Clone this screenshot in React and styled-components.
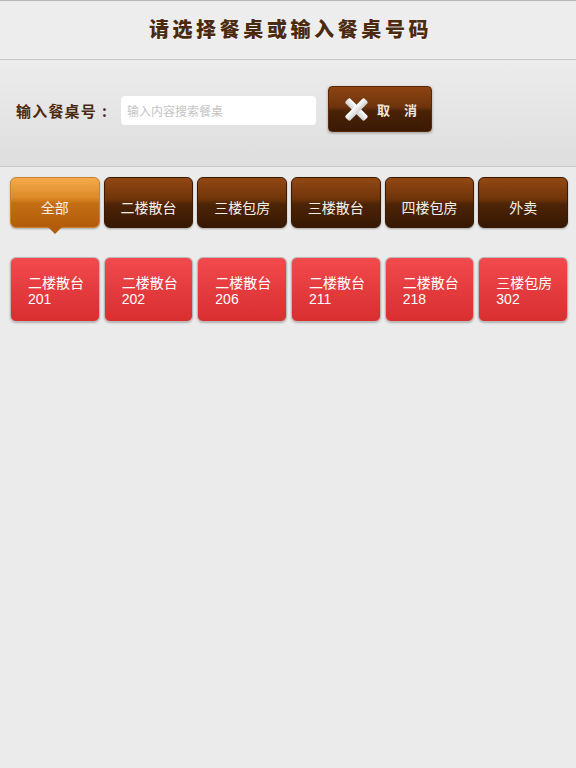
import styled, { createGlobalStyle } from 'styled-components';

const GlobalStyle = createGlobalStyle`
    html, body {
        margin: 0;
        padding: 0;
        background: #ebebeb;
        font-family: "Noto Sans CJK SC", "Liberation Sans", sans-serif;
    }
    * { box-sizing: border-box; }
`

let categories = ['全部', '二楼散台', '三楼包房', '三楼散台', '四楼包房', '外卖']

let tables = [
    { area: '二楼散台', no: '201' },
    { area: '二楼散台', no: '202' },
    { area: '二楼散台', no: '206' },
    { area: '二楼散台', no: '211' },
    { area: '二楼散台', no: '218' },
    { area: '三楼包房', no: '302' },
]

let CrossIcon = () => (
    <svg width="23" height="23" viewBox="0 0 24 24">
        <defs>
            <linearGradient id="xg" x1="0" y1="0" x2="0" y2="1">
                <stop offset="0" stopColor="#ffffff" />
                <stop offset="1" stopColor="#cfcfcf" />
            </linearGradient>
        </defs>
        <g fill="url(#xg)">
            <rect x="-2" y="8.5" width="28" height="7" rx="2" transform="rotate(45 12 12)" />
            <rect x="-2" y="8.5" width="28" height="7" rx="2" transform="rotate(-45 12 12)" />
        </g>
    </svg>
)

let App = () => {
    return (
        <Page>
            <GlobalStyle />
            <Header>
                <Title>请选择餐桌或输入餐桌号码</Title>
            </Header>
            <SearchBar>
                <Label>输入餐桌号<Colon>:</Colon></Label>
                <SearchInput placeholder='输入内容搜索餐桌' />
                <CancelButton>
                    <CrossIcon />
                    <span>取</span>
                    <span>消</span>
                </CancelButton>
            </SearchBar>
            <Tabs>
                {categories.map((c, i) => (
                    <Tab key={c} active={i === 0}>{c}</Tab>
                ))}
            </Tabs>
            <Tables>
                {tables.map(t => (
                    <TableCard key={t.no}>
                        <span>{t.area}</span>
                        <span>{t.no}</span>
                    </TableCard>
                ))}
            </Tables>
        </Page>
    )
}

let Page = styled.div`
    width: 576px;
    min-height: 768px;
    background: #ebebeb;
`

let Header = styled.div`
    height: 60px;
    border-top: 1px solid #b4b4b4;
    border-bottom: 1px solid #c9c9c9;
    background: #ededed;
    display: flex;
    align-items: center;
    justify-content: center;
    padding-bottom: 3px;
`

let Title = styled.h1`
    margin: 0;
    padding-left: 5px;
    font-size: 20px;
    font-weight: 900;
    letter-spacing: 3.6px;
    color: #4b2a0f;
    text-shadow: 0 1px 0 rgba(255, 255, 255, 0.8);
`

let SearchBar = styled.div`
    height: 107px;
    border-bottom: 1px solid #c9c9c9;
    background: linear-gradient(#ececec, #dedede);
    display: flex;
    align-items: center;
    padding: 0 0 5px 16px;
`

let Label = styled.span`
    font-size: 15px;
    font-weight: 700;
    color: #4b2a0f;
    letter-spacing: 1.2px;
    display: flex;
    align-items: center;
`

let Colon = styled.span`
    margin-left: 5px;
    font-weight: 700;
`

let SearchInput = styled.input`
    width: 195px;
    height: 29px;
    margin-left: 13px;
    border: none;
    border-radius: 4px;
    background: #fff;
    padding: 0 6px;
    font-family: inherit;
    font-size: 12px;
    outline: none;
    &::placeholder {
        color: #c4c4c4;
    }
`

let CancelButton = styled.button`
    width: 104px;
    height: 46px;
    margin-left: 12px;
    margin-bottom: 3px;
    border: 1px solid #5a2a08;
    border-radius: 4px;
    background: linear-gradient(#8d4413 0%, #6f340c 45%, #4a2206 55%, #3a1904 100%);
    box-shadow: 0 1px 3px rgba(0, 0, 0, 0.35);
    display: flex;
    align-items: center;
    padding: 0 0 0 16px;
    font-family: inherit;
    font-size: 13px;
    font-weight: 700;
    color: #f3e6d8;
    svg {
        margin-right: 9px;
    }
    span + span {
        margin-left: 14px;
    }
`

let Tabs = styled.div`
    display: grid;
    grid-template-columns: repeat(6, 1fr);
    gap: 4px;
    padding: 10px 8px 0 10px;
`

let Tab = styled.div`
    position: relative;
    height: 51px;
    border-radius: 6px;
    display: flex;
    align-items: center;
    justify-content: center;
    padding-top: 8px;
    font-size: 14px;
    color: #f5efe8;
    border: 1px solid ${p => p.active ? '#c78431' : '#3a1a05'};
    box-shadow: 0 1px 2px rgba(0, 0, 0, 0.3);
    background: ${p => p.active
        ? 'linear-gradient(#f4aa4c 0%, #de8a28 40%, #c46e14 52%, #b25c0b 100%)'
        : 'linear-gradient(#934814 0%, #713509 42%, #4d2406 54%, #361803 100%)'};
    &::after {
        content: '';
        display: ${p => p.active ? 'block' : 'none'};
        position: absolute;
        left: 50%;
        bottom: -7px;
        margin-left: -7px;
        border-left: 7px solid transparent;
        border-right: 7px solid transparent;
        border-top: 7px solid #b25c0b;
    }
`

let Tables = styled.div`
    display: grid;
    grid-template-columns: repeat(6, 1fr);
    gap: 4px;
    padding: 29px 8px 0 10px;
`

let TableCard = styled.div`
    height: 65px;
    border-radius: 6px;
    border: 1px solid #b8b8b8;
    box-shadow: 0 1px 2px rgba(0, 0, 0, 0.25);
    background: linear-gradient(#f24a4e 0%, #e43b3e 50%, #d92f31 100%);
    display: flex;
    flex-direction: column;
    justify-content: center;
    padding: 2px 0 0 17px;
    font-family: "Liberation Sans", "Noto Sans CJK SC", sans-serif;
    font-size: 14px;
    line-height: 16px;
    color: #fff;
`

export default App;
